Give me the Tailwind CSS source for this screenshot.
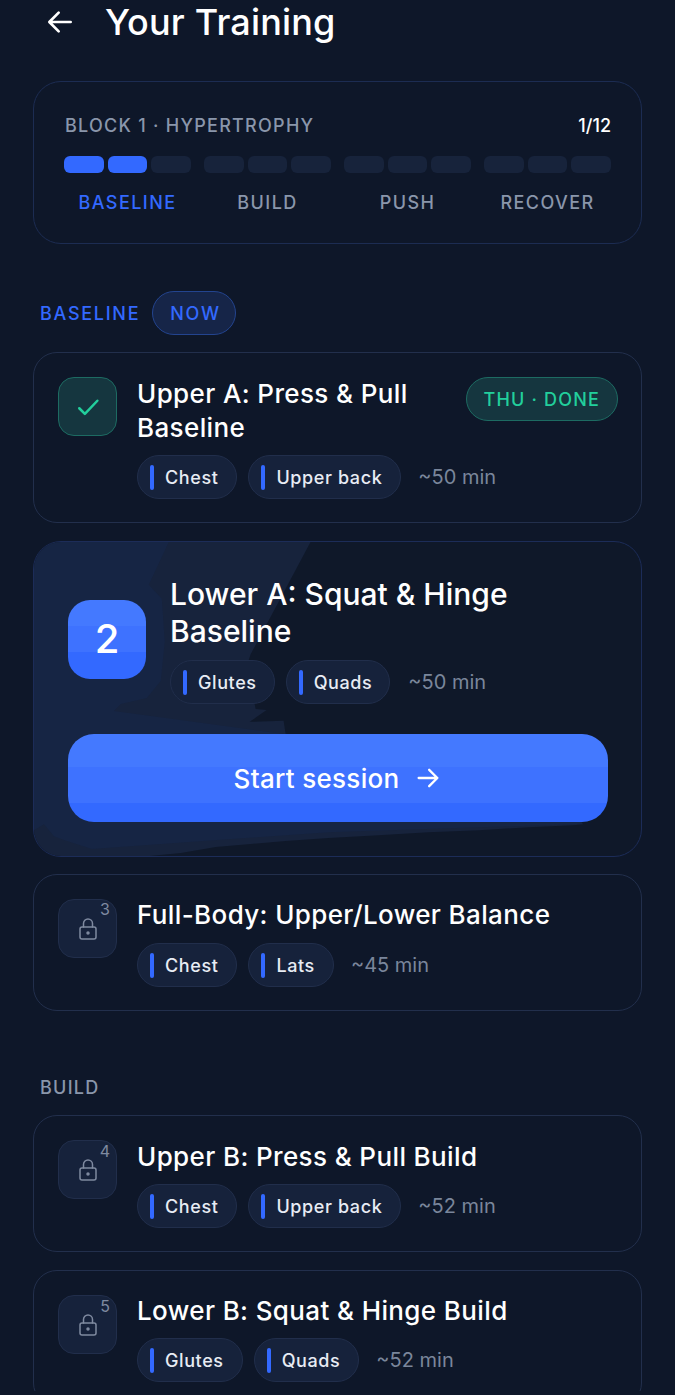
<!DOCTYPE html>
<html lang="en">
<head>
  <meta charset="UTF-8">
  <meta name="viewport" content="width=device-width, initial-scale=1.0">
  <title>Your Training</title>
  <script src="https://cdn.jsdelivr.net/npm/@tailwindcss/browser@4"></script>
</head>
<body class="bg-[#0e1729] text-white font-['Inter',sans-serif]">
<div class="h-[1391px] overflow-hidden px-[33px]">

  <!-- Header -->
  <header class="flex items-center h-[44px] gap-[29px] pl-[11px]">
    <svg class="w-[32px] h-[32px]" viewBox="0 0 24 24" fill="none" stroke="currentColor" stroke-width="2" stroke-linecap="round" stroke-linejoin="round"><path d="M20 12H4.5M11 5l-7 7 7 7"/></svg>
    <h1 class="text-[36px] font-medium tracking-[0.005em] leading-[44px]">Your Training</h1>
  </header>

  <!-- Block progress -->
  <section class="mt-[37px] h-[163px] rounded-[28px] border border-[#1c2c52] px-[30px] pt-[32px]">
    <div class="flex justify-between items-center h-[24px] text-[18px] leading-[24px]">
      <span class="text-[#8a96ab] font-medium tracking-[0.07em] pl-[1px]">BLOCK 1 · HYPERTROPHY</span>
      <span class="font-medium">1/12</span>
    </div>
    <div class="mt-[18px] grid grid-cols-4 gap-[13px]">
      <div class="flex gap-[4px]">
        <span class="h-[17px] flex-1 rounded-[6px] bg-[#3369ff]"></span>
        <span class="h-[17px] flex-1 rounded-[6px] bg-[#3369ff]"></span>
        <span class="h-[17px] flex-1 rounded-[6px] bg-[#17233b]"></span>
      </div>
      <div class="flex gap-[4px]">
        <span class="h-[17px] flex-1 rounded-[6px] bg-[#17233b]"></span>
        <span class="h-[17px] flex-1 rounded-[6px] bg-[#17233b]"></span>
        <span class="h-[17px] flex-1 rounded-[6px] bg-[#17233b]"></span>
      </div>
      <div class="flex gap-[4px]">
        <span class="h-[17px] flex-1 rounded-[6px] bg-[#17233b]"></span>
        <span class="h-[17px] flex-1 rounded-[6px] bg-[#17233b]"></span>
        <span class="h-[17px] flex-1 rounded-[6px] bg-[#17233b]"></span>
      </div>
      <div class="flex gap-[4px]">
        <span class="h-[17px] flex-1 rounded-[6px] bg-[#17233b]"></span>
        <span class="h-[17px] flex-1 rounded-[6px] bg-[#17233b]"></span>
        <span class="h-[17px] flex-1 rounded-[6px] bg-[#17233b]"></span>
      </div>
    </div>
    <div class="mt-[18px] grid grid-cols-4 gap-[13px] text-center text-[18px] font-medium leading-[24px] tracking-[0.08em] text-[#8a96ab]">
      <span class="text-[#3369ff]">BASELINE</span>
      <span>BUILD</span>
      <span>PUSH</span>
      <span>RECOVER</span>
    </div>
  </section>

  <!-- Baseline -->
  <div class="mt-[47px] flex items-center gap-[12px] pl-[7px] text-[18px] font-medium tracking-[0.095em] text-[#3369ff]">
    <span>BASELINE</span>
    <span class="h-[44px] pl-[17px] pr-[14px] flex items-center rounded-full bg-[#162548] border border-[#23448f]">NOW</span>
  </div>

  <!-- Done session -->
  <article class="mt-[17px] h-[171px] rounded-[24px] border border-[#222f4c] pl-[24px] pr-[23px] pt-[24px] flex gap-[20px]">
    <div class="w-[59px] h-[59px] shrink-0 rounded-[16px] bg-[#15363f] border border-[#1d6b62] flex items-center justify-center">
      <svg class="w-[30px] h-[30px] text-[#22cf9c]" viewBox="0 0 24 24" fill="none" stroke="currentColor" stroke-width="2" stroke-linecap="round" stroke-linejoin="round"><path d="M5 13l4.5 4.5L19.5 7"/></svg>
    </div>
    <div class="flex-1 min-w-0">
      <div class="flex justify-between items-start">
        <h2 class="text-[26px] font-medium leading-[34px] tracking-[0.38px] w-[300px]">Upper A: Press &amp; Pull Baseline</h2>
        <span class="h-[44px] px-[17px] flex items-center rounded-full bg-[#15363f] border border-[#1d6b62] text-[#22cf9c] text-[18px] tracking-[0.065em] font-medium whitespace-nowrap">THU · DONE</span>
      </div>
      <div class="mt-[10px] flex items-center gap-[11px]">
        <span class="h-[44px] pl-[12px] pr-[18px] flex items-center gap-[11px] rounded-full bg-[#16223b] border border-[#212e4b] text-[18px] font-medium tracking-[0.6px] text-[#e8ecf4]"><i class="w-[4px] h-[25px] rounded-full bg-[#3369ff]"></i>Chest</span>
        <span class="h-[44px] pl-[12px] pr-[18px] flex items-center gap-[11px] rounded-full bg-[#16223b] border border-[#212e4b] text-[18px] font-medium tracking-[0.6px] text-[#e8ecf4]"><i class="w-[4px] h-[25px] rounded-full bg-[#3369ff]"></i>Upper back</span>
        <span class="ml-[6px] text-[20px] text-[#7a869b]">~50 min</span>
      </div>
    </div>
  </article>

  <!-- Current session -->
  <article class="relative overflow-hidden mt-[18px] h-[316px] rounded-[28px] border border-[#1c2c58] pl-[34px] pr-[33px] bg-[#0f1829]">
    <svg class="absolute inset-0 w-full h-full" viewBox="0 0 608 316" preserveAspectRatio="none">
      <path fill="#17233c" d="M0 0H277L217 113 213 125 222 168 233 169 216 181 250 180 252 193 300 200 540 270 550 284 540 285 496 287 446 290 395 292 345 295 295 298 252 301 217 304 182 307 147 313 116 316H0Z"/>
      <path fill="#162544" d="M0 0H135L115 43 128 57 131 100 127 140 113 157 87 163 80 170 300 200 540 270 548 283 543 284 295 292 155 302 58 309 30 300 20 296 10 284 0 290Z"/>
    </svg>
    <div class="relative">
      <div class="flex items-center gap-[24px] pt-[34px]">
        <div class="w-[78px] h-[79px] -mt-[2px] shrink-0 rounded-[22px] bg-[linear-gradient(#4479ff_33%,#3e72ff_33%,#3e72ff_66%,#3369ff_66%)] flex items-center justify-center text-[40px] font-medium">2</div>
        <div class="flex-1 min-w-0">
          <h2 class="text-[30px] font-medium leading-[37px]">Lower A: Squat &amp; Hinge Baseline</h2>
          <div class="mt-[10px] flex items-center gap-[11px]">
            <span class="h-[44px] pl-[12px] pr-[17px] flex items-center gap-[11px] rounded-full bg-[#16223b] border border-[#212e4b] text-[18px] font-medium tracking-[0.6px] text-[#e8ecf4]"><i class="w-[4px] h-[25px] rounded-full bg-[#3369ff]"></i>Glutes</span>
            <span class="h-[44px] pl-[12px] pr-[17px] flex items-center gap-[11px] rounded-full bg-[#16223b] border border-[#212e4b] text-[18px] font-medium tracking-[0.6px] text-[#e8ecf4]"><i class="w-[4px] h-[25px] rounded-full bg-[#3369ff]"></i>Quads</span>
            <span class="ml-[7px] text-[20px] text-[#7a869b]">~50 min</span>
          </div>
        </div>
      </div>
      <button class="mt-[30px] w-full h-[88px] rounded-[26px] bg-[linear-gradient(#4479ff_38%,#3e72ff_38%,#3e72ff_78%,#3369ff_78%)] flex items-center justify-center gap-[15px] text-[26px] font-medium tracking-[0.3px]">
        Start session
        <svg class="w-[28px] h-[28px]" viewBox="0 0 24 24" fill="none" stroke="currentColor" stroke-width="2" stroke-linecap="round" stroke-linejoin="round"><path d="M4 12h16M13 5l7 7-7 7"/></svg>
      </button>
    </div>
  </article>

  <!-- Locked session -->
  <article class="mt-[17px] h-[137px] rounded-[24px] border border-[#222f4c] pl-[24px] pr-[23px] pt-[24px] flex gap-[20px]">
    <div class="relative w-[59px] h-[59px] shrink-0 rounded-[16px] bg-[#16223b] border border-[#212e4b] flex items-center justify-center">
      <svg class="w-[24px] h-[24px] text-[#7f8aa0]" viewBox="0 0 24 24" fill="none" stroke="currentColor" stroke-width="1.5" stroke-linecap="round" stroke-linejoin="round"><rect x="4" y="10" width="16" height="12" rx="2"/><path d="M7.5 10V6.5a4.5 4.5 0 0 1 9 0V10"/><circle cx="12" cy="16" r="1" fill="currentColor"/></svg>
      <span class="absolute top-[1px] right-[6px] text-[16px] leading-none text-[#7f8aa0]">3</span>
    </div>
    <div class="flex-1 min-w-0">
      <h2 class="text-[26px] font-medium leading-[34px] tracking-[0.38px] -mt-[1px]">Full-Body: Upper/Lower Balance</h2>
      <div class="mt-[11px] flex items-center gap-[11px]">
        <span class="h-[44px] pl-[12px] pr-[18px] flex items-center gap-[11px] rounded-full bg-[#16223b] border border-[#212e4b] text-[18px] font-medium tracking-[0.6px] text-[#e8ecf4]"><i class="w-[4px] h-[25px] rounded-full bg-[#3369ff]"></i>Chest</span>
        <span class="h-[44px] pl-[12px] pr-[18px] flex items-center gap-[11px] rounded-full bg-[#16223b] border border-[#212e4b] text-[18px] font-medium tracking-[0.6px] text-[#e8ecf4]"><i class="w-[4px] h-[25px] rounded-full bg-[#3369ff]"></i>Lats</span>
        <span class="ml-[6px] text-[20px] text-[#7a869b]">~45 min</span>
      </div>
    </div>
  </article>

  <!-- Build -->
  <div class="mt-[65px] pl-[7px] h-[24px] leading-[24px] text-[18px] font-medium tracking-[0.07em] text-[#8a96ab]">BUILD</div>

  <article class="mt-[15px] h-[137px] rounded-[24px] border border-[#222f4c] pl-[24px] pr-[23px] pt-[24px] flex gap-[20px]">
    <div class="relative w-[59px] h-[59px] shrink-0 rounded-[16px] bg-[#16223b] border border-[#212e4b] flex items-center justify-center">
      <svg class="w-[24px] h-[24px] text-[#7f8aa0]" viewBox="0 0 24 24" fill="none" stroke="currentColor" stroke-width="1.5" stroke-linecap="round" stroke-linejoin="round"><rect x="4" y="10" width="16" height="12" rx="2"/><path d="M7.5 10V6.5a4.5 4.5 0 0 1 9 0V10"/><circle cx="12" cy="16" r="1" fill="currentColor"/></svg>
      <span class="absolute top-[2px] right-[6px] text-[16px] leading-none text-[#7f8aa0]">4</span>
    </div>
    <div class="flex-1 min-w-0">
      <h2 class="text-[26px] font-medium leading-[34px] tracking-[0.38px]">Upper B: Press &amp; Pull Build</h2>
      <div class="mt-[10px] flex items-center gap-[11px]">
        <span class="h-[44px] pl-[12px] pr-[18px] flex items-center gap-[11px] rounded-full bg-[#16223b] border border-[#212e4b] text-[18px] font-medium tracking-[0.6px] text-[#e8ecf4]"><i class="w-[4px] h-[25px] rounded-full bg-[#3369ff]"></i>Chest</span>
        <span class="h-[44px] pl-[12px] pr-[18px] flex items-center gap-[11px] rounded-full bg-[#16223b] border border-[#212e4b] text-[18px] font-medium tracking-[0.6px] text-[#e8ecf4]"><i class="w-[4px] h-[25px] rounded-full bg-[#3369ff]"></i>Upper back</span>
        <span class="ml-[6px] text-[20px] text-[#7a869b]">~52 min</span>
      </div>
    </div>
  </article>

  <article class="mt-[18px] h-[137px] rounded-[24px] border border-[#222f4c] pl-[24px] pr-[23px] pt-[24px] flex gap-[20px]">
    <div class="relative w-[59px] h-[59px] shrink-0 rounded-[16px] bg-[#16223b] border border-[#212e4b] flex items-center justify-center">
      <svg class="w-[24px] h-[24px] text-[#7f8aa0]" viewBox="0 0 24 24" fill="none" stroke="currentColor" stroke-width="1.5" stroke-linecap="round" stroke-linejoin="round"><rect x="4" y="10" width="16" height="12" rx="2"/><path d="M7.5 10V6.5a4.5 4.5 0 0 1 9 0V10"/><circle cx="12" cy="16" r="1" fill="currentColor"/></svg>
      <span class="absolute top-[2px] right-[6px] text-[16px] leading-none text-[#7f8aa0]">5</span>
    </div>
    <div class="flex-1 min-w-0">
      <h2 class="text-[26px] font-medium leading-[34px] tracking-[0.38px] -mt-[1px]">Lower B: Squat &amp; Hinge Build</h2>
      <div class="mt-[10px] flex items-center gap-[11px]">
        <span class="h-[44px] pl-[12px] pr-[18px] flex items-center gap-[11px] rounded-full bg-[#16223b] border border-[#212e4b] text-[18px] font-medium tracking-[0.6px] text-[#e8ecf4]"><i class="w-[4px] h-[25px] rounded-full bg-[#3369ff]"></i>Glutes</span>
        <span class="h-[44px] pl-[12px] pr-[18px] flex items-center gap-[11px] rounded-full bg-[#16223b] border border-[#212e4b] text-[18px] font-medium tracking-[0.6px] text-[#e8ecf4]"><i class="w-[4px] h-[25px] rounded-full bg-[#3369ff]"></i>Quads</span>
        <span class="ml-[6px] text-[20px] text-[#7a869b]">~52 min</span>
      </div>
    </div>
  </article>

</div>
</body>
</html>
